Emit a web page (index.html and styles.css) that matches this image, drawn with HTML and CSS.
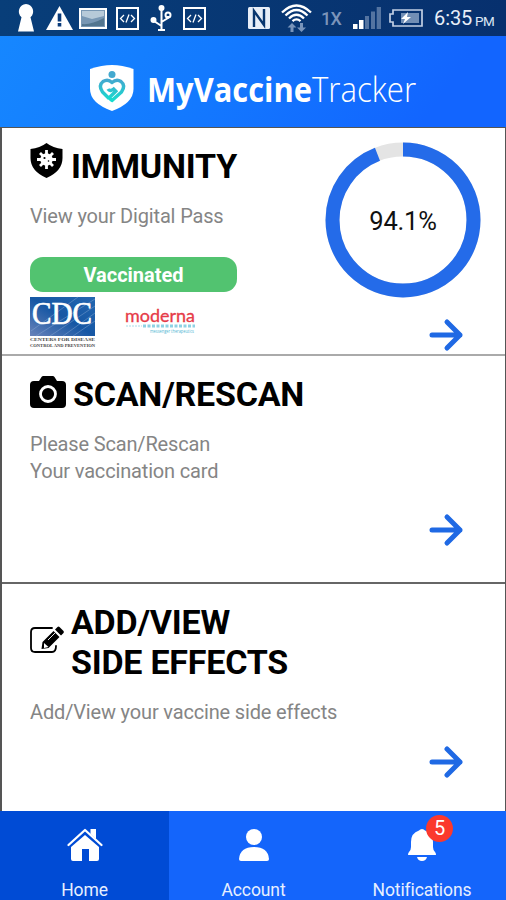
FILE: index.html
```html
<!DOCTYPE html>
<html lang="en">
<head>
<meta charset="utf-8">
<title>MyVaccineTracker</title>
<link rel="stylesheet" href="styles.css">
</head>
<body>
<div class="app">
  <div class="status">
    <div class="status-left">
      <svg width="16" height="28" viewBox="0 0 16 28"><path fill="#fff" d="M8 0a7.500 7.500 0 0 1 4.500 13.200L16 27.500H0L3.500 13.200A7.500 7.500 0 0 1 8 0z"/></svg>
      <svg class="warn" width="27" height="24" viewBox="0 0 27 24"><path fill="#fff" d="M13.500 0 27 24H0z"/><path stroke="#083a7a" stroke-width="3.600" d="M13.500 7.500v8M13.500 17v3.500"/></svg>
      <svg class="photo" width="28" height="21" viewBox="0 0 28 21"><path fill="#7897b4" stroke="#fff" stroke-width="2" d="M1 1h26v19H1z"/><path fill="#b7cad9" d="M3 3h22v5L13 11 3 8z"/><path fill="#52758f" d="M3 16q9 1 22-6v8H3z"/></svg>
      <svg class="code" width="23" height="23" viewBox="0 0 23 23" fill="none" stroke="#fff"><path stroke-width="2" d="M1 1h21v21H1z"/><path stroke-width="1.300" d="m8 8-3.500 3.500L8 15m7-7 3.500 3.500L15 15m-2-7.500-3 8"/></svg>
      <svg class="usb" width="22" height="27" viewBox="0 0 22 27" fill="none" stroke="#fff" stroke-width="2"><path d="M11.500 3v21M11.500 21 4 16v-1M11.500 17l6.500-4v-2"/><circle cx="11.500" cy="3" r="2" fill="#fff"/><circle cx="3.500" cy="15" r="2" fill="#fff"/><circle cx="18" cy="10" r="2.500"/><path d="M8 25h7"/></svg>
      <svg class="code" width="23" height="23" viewBox="0 0 23 23" fill="none" stroke="#fff"><path stroke-width="2" d="M1 1h21v21H1z"/><path stroke-width="1.300" d="m8 8-3.500 3.500L8 15m7-7 3.500 3.500L15 15m-2-7.500-3 8"/></svg>
    </div>
    <div class="status-right">
      <svg width="22" height="22" viewBox="0 0 22 22"><rect width="22" height="22" rx="1.500" fill="#e7eef8"/><path fill="none" stroke="#08366f" stroke-width="2.400" d="M6 20V4l10 14V2"/></svg>
      <svg class="wifi" width="31" height="29" viewBox="0 0 31 29" fill="none"><path stroke="#fff" stroke-width="2.300" d="M1 8.500q14.500-14 29 0M4.500 11.500q11-11 22 0M8 14.500q7.500-7.500 15 0M11.500 17.200q4-3.700 8 0"/><path fill="#7894bb" d="m11 19 4.500 4.500H12.500V28h-3v-4.500H6.500zM20.500 28 16 23.500h3V19h3v4.500h3z"/></svg>
      <span class="net">1X</span>
      <svg class="signal" width="28" height="22" viewBox="0 0 28 22"><path fill="#fff" d="M0 17h4.500v5H0zM6 13h4.500v9H6z"/><path fill="#5474a1" d="M12 9h4v13h-4zM18 4.500h4V22h-4zM23.700 0H28v22h-4.300z"/></svg>
      <svg class="battery" width="34" height="18" viewBox="0 0 34 18"><path fill="none" stroke="#c2d0e4" stroke-width="1.700" d="M4 1h29v16H4v-4H1V5h3z"/><path fill="#718eb5" d="M12 4h18v10H12z"/><path fill="#fff" d="m19 3-7 7h4l-2 5 8-7h-4z"/></svg>
      <span class="time">6:35</span><span class="pm">PM</span>
    </div>
  </div>

  <header class="header">
    <svg width="326" height="56" viewBox="0 0 326 56">
      <defs><linearGradient id="heart" x1="0" y1="0" x2="0" y2="1"><stop offset="0" stop-color="#43a9cf"/><stop offset="1" stop-color="#17dccf"/></linearGradient></defs>
      <path fill="#fff" d="M22 1q10 0 21.500 4v20q0 14-21.500 22Q0 39 0 25V5Q12 1 22 1z"/>
      <circle cx="22" cy="10.500" r="3.500" fill="#43a9cf"/>
      <path fill="none" stroke="url(#heart)" stroke-width="3.400" stroke-linejoin="round" d="M19 34.500 12.500 28q-4.500-6.500.5-10.500 5-3 9 1 4.500-4 9-1 5 4 .5 10.500L22 36.500l-3-2.500 8-8M18 25q2 3.500 7-1"/>
      <text class="brand-bold" x="57" y="37.500" textLength="165" lengthAdjust="spacingAndGlyphs">MyVaccine</text>
      <text class="brand-light" x="222" y="37.500" textLength="104" lengthAdjust="spacingAndGlyphs">Tracker</text>
    </svg>
  </header>

  <main class="cards">
    <section class="card immunity">
      <div class="info">
        <div class="title">
          <svg class="shield" width="33" height="35" viewBox="0 0 33 35"><path d="M16.500 0Q23 5 32.500 6v9q0 13-16 20Q.5 28 .5 15V6Q10 5 16.500 0z"/><circle cx="16.500" cy="16.500" r="6.200" fill="#fff"/><path stroke="#fff" stroke-width="2.800" d="M16.500 7v19M7 16.500h19M10 10l13 13M23 10 10 23"/><circle cx="14.500" cy="15" r="1.100"/><circle cx="18.500" cy="18" r=".8"/></svg>
          <h2>IMMUNITY</h2>
        </div>
        <p>View your Digital Pass</p>
        <div class="badge">Vaccinated</div>
        <div class="logos">
          <svg width="66" height="52" viewBox="0 0 66 52">
            <defs><linearGradient id="cdc" x1="0" y1="1" x2="1" y2="0"><stop offset="0" stop-color="#6982b9"/><stop offset=".5" stop-color="#1657a4"/><stop offset="1" stop-color="#2467b0"/></linearGradient></defs>
            <path fill="url(#cdc)" d="M0 0h65v39H0z"/>
            <path stroke="#91b0d8" stroke-width=".7" opacity=".6" d="M6 39 65 2M20 39 65 9M33 39 65 16M1 34 48 0M43 39 65 24"/>
            <text class="cdc" x="2" y="26.500" textLength="60" lengthAdjust="spacingAndGlyphs">CDC</text>
            <text class="cdc-small" x="0" y="44" textLength="65" lengthAdjust="spacingAndGlyphs">CENTERS FOR DISEASE</text>
            <text class="cdc-small" x="0" y="49.500" textLength="65" lengthAdjust="spacingAndGlyphs">CONTROL AND PREVENTION</text>
          </svg>
          <svg class="moderna" width="72" height="30" viewBox="0 0 72 30">
            <text class="moderna-name" x="0" y="15" textLength="70" lengthAdjust="spacingAndGlyphs">moderna</text>
            <path stroke="#69c4dc" stroke-width="3" stroke-dasharray="3 1.500" opacity=".75" d="M18 19h52"/><path stroke="#a7dce9" stroke-dasharray="2 1" d="M1 19h16"/>
            <text class="moderna-tag" x="25" y="26" textLength="44" lengthAdjust="spacingAndGlyphs">messenger therapeutics</text>
          </svg>
        </div>
      </div>
      <div class="side">
        <div class="ring">
          <svg width="156" height="156" viewBox="0 0 156 156" fill="none"><circle cx="78" cy="78" r="70.500" stroke="#e4e4e4" stroke-width="14"/><circle cx="78" cy="78" r="70.500" stroke="#246be9" stroke-width="14" pathLength="100" stroke-dasharray="94.1 5.900" transform="rotate(-90 78 78)"/></svg>
          <span>94.1%</span>
        </div>
        <svg class="arrow" width="34" height="32" viewBox="0 0 34 32"><path d="M3 16h28M18 3l13 13-13 13"/></svg>
      </div>
    </section>

    <section class="card scan">
      <div class="title">
        <svg class="camera" width="36" height="33" viewBox="0 0 36 33"><path d="M4 5h5l2.500-4q.5-1 2-1h9q1.500 0 2 1L27 5h5q4 0 4 4v19q0 4-4 4H4q-4 0-4-4V9q0-4 4-4z"/><circle cx="18" cy="18" r="7.500" fill="none" stroke="#fff" stroke-width="2.800"/></svg>
        <h2>SCAN/RESCAN</h2>
      </div>
      <p>Please Scan/Rescan<br>Your vaccination card</p>
      <svg class="arrow" width="34" height="32" viewBox="0 0 34 32"><path d="M3 16h28M18 3l13 13-13 13"/></svg>
    </section>

    <section class="card effects">
      <div class="title">
        <svg class="edit" width="35" height="28" viewBox="0 0 35 28"><path fill="none" stroke="#000" stroke-width="1.800" stroke-linecap="round" d="M22 2H5Q1 2 1 6v16q0 4 4 4h17q4 0 4-6"/><path d="m12.500 16 11-11 6 6-11 11-7 1zM25 3.500l2.500-2.500q1-.8 2 0l4 4q.8 1 0 2L31 9.500z"/><path fill="#fff" d="m14 17 4.500 4-4.500 1z"/><path stroke="#fff" stroke-width=".9" d="m18 14 7-7"/></svg>
        <h2>ADD/VIEW<br>SIDE EFFECTS</h2>
      </div>
      <p>Add/View your vaccine side effects</p>
      <svg class="arrow" width="34" height="32" viewBox="0 0 34 32"><path d="M3 16h28M18 3l13 13-13 13"/></svg>
    </section>
  </main>

  <nav class="nav">
    <div class="tab active">
      <svg width="36" height="34" viewBox="0 0 36 34" fill="#fff"><path d="M18 7 32 19v12q0 2-2 2h-8V21h-7v12H6q-2 0-2-2V19z"/><path fill="none" stroke="#fff" stroke-width="2.300" stroke-linecap="round" stroke-linejoin="round" d="M1.500 17 18 2l16.500 15"/><path d="M23.500 1H29v10l-5.500-5z"/></svg>
      <span>Home</span>
    </div>
    <div class="tab">
      <svg width="32" height="34" viewBox="0 0 32 34" fill="#fff"><circle cx="16" cy="9" r="8"/><path d="M1 31q1-12 15-12t15 12q0 2-2 2H3q-2 0-2-2z"/></svg>
      <span>Account</span>
    </div>
    <div class="tab">
      <div class="bell">
        <svg width="28" height="34" viewBox="0 0 28 34" fill="#fff"><path d="M14 1q2 0 3 1.500Q25 5 25 14v5q0 3 2 5 1 1 1 3H0q0-2 1-3 2-2 2-5v-5q0-9 8-11.500Q12 1 14 1zM9 29h10q-1 4-5 4t-5-4z"/></svg>
        <b>5</b>
      </div>
      <span>Notifications</span>
    </div>
  </nav>
</div>
</body>
</html>
```

FILE: styles.css
```css
* { box-sizing: border-box; }
body { margin: 0; font-family: Roboto, sans-serif; background: #fff; }
svg { display: block; flex: none; overflow: visible; }
.app { width: 506px; height: 900px; overflow: hidden; display: flex; flex-direction: column; }

.status { height: 36px; flex: none; display: flex; justify-content: space-between; padding: 0 11px 0 18px; background: linear-gradient(90deg, #083e79, #07306e); }
.status-left, .status-right { display: flex; align-items: center; }
.warn { margin-left: 12px; }
.photo { margin-left: 6px; }
.photo + .code { margin-left: 9px; }
.usb { margin-left: 11px; }
.usb + .code { margin-left: 11px; }
.wifi { margin-left: 11px; }
.net { width: 20px; margin-left: 9px; color: #7b94ba; font-size: 18px; font-weight: 500; letter-spacing: -.8px; }
.signal { margin-left: 12px; }
.battery { margin-left: 8px; }
.time { width: 38px; margin-left: 11px; color: #e7eef8; font-size: 20px; letter-spacing: -.1px; white-space: nowrap; }
.pm { width: 20px; margin: 5px 0 0 3px; color: #dce6f4; font-size: 13.5px; letter-spacing: -.4px; }

.header { height: 91px; flex: none; padding: 28px 0 0 90px; background: linear-gradient(125deg, #1687ff 0%, #137aff 40%, #1265ff 85%); }
.brand-bold, .brand-light { font-family: "Open Sans", sans-serif; font-size: 34px; fill: #fff; }
.brand-bold { font-weight: 700; }
.brand-light { font-weight: 300; }

.cards { height: 684px; flex: none; border: solid #555; border-width: 1px 1px 0 2px; }
.card { padding: 0 24px 0 28px; }
.immunity { height: 228px; display: flex; justify-content: space-between; border-bottom: 2px solid #aaa; }
.scan { height: 228px; padding-top: 18px; border-bottom: 2px solid #666; }
.effects { height: 227px; padding-top: 18px; }
.title { display: flex; }
h2 { margin: 0; font-size: 34px; line-height: 40px; font-weight: 700; letter-spacing: -.22px; white-space: nowrap; }
p { margin: 0; color: #858585; font-size: 20px; line-height: 27px; letter-spacing: -.16px; white-space: nowrap; }
.info { width: 210px; padding-top: 18px; }
.shield { margin-top: -3px; }
.immunity h2 { margin-left: 8px; }
.immunity p { margin-top: 17px; }
.badge { width: 207px; height: 35px; margin-top: 27px; border-radius: 13px; background: #52c370; color: #fff; font-size: 20px; font-weight: 700; line-height: 36px; text-align: center; }
.logos { display: flex; margin-top: 5px; }
.moderna { margin: 10px 0 0 29px; }
.cdc { font: 31px "Liberation Serif", serif; fill: #fff; stroke: #fff; stroke-width: .7px; }
.cdc-small { font: 700 5px "Liberation Serif", serif; fill: #444; }
.moderna-name { font: 17px Lato, sans-serif; fill: #e63b48; stroke: #e63b48; stroke-width: .3px; }
.moderna-tag { font: 5px "Open Sans", sans-serif; fill: #50b6d3; }
.side { width: 156px; padding-top: 14px; }
.ring { width: 156px; height: 156px; display: grid; place-items: center; }
.ring svg, .ring span { grid-area: 1 / 1; }
.ring span { color: #111; font-size: 25.5px; letter-spacing: -.2px; padding-top: 2px; }
.arrow { fill: none; stroke: #1f69e4; stroke-width: 5; stroke-linecap: round; stroke-linejoin: round; margin-left: auto; }
.side .arrow { margin-top: 21px; margin-right: 18px; }
.card > .arrow { margin-right: 18px; }
.scan h2 { margin-left: 7px; }
.camera { margin-top: 2px; }
.scan p { margin-top: 17px; }
.scan .arrow { margin-top: 29px; }
.edit { margin-top: 24px; }
.effects h2 { margin-left: 6px; }
.effects p { margin-top: 17px; }
.effects .arrow { margin-top: 20px; }

.nav { flex: 1; display: grid; grid-template-columns: 169px 169px 168px; background: #1465fb; }
.tab { padding-top: 17px; display: flex; flex-direction: column; align-items: center; color: #e7efff; font-size: 17.5px; }
.tab.active { background: #004bd5; }
.tab > span { margin-top: 17px; line-height: 22px; letter-spacing: -.1px; white-space: nowrap; }
.bell { position: relative; }
.bell b { position: absolute; left: 18px; top: -13px; width: 27px; height: 27px; border-radius: 50%; background: #fb392d; color: #fff; font-size: 20px; font-weight: 400; line-height: 26px; text-align: center; }
```
